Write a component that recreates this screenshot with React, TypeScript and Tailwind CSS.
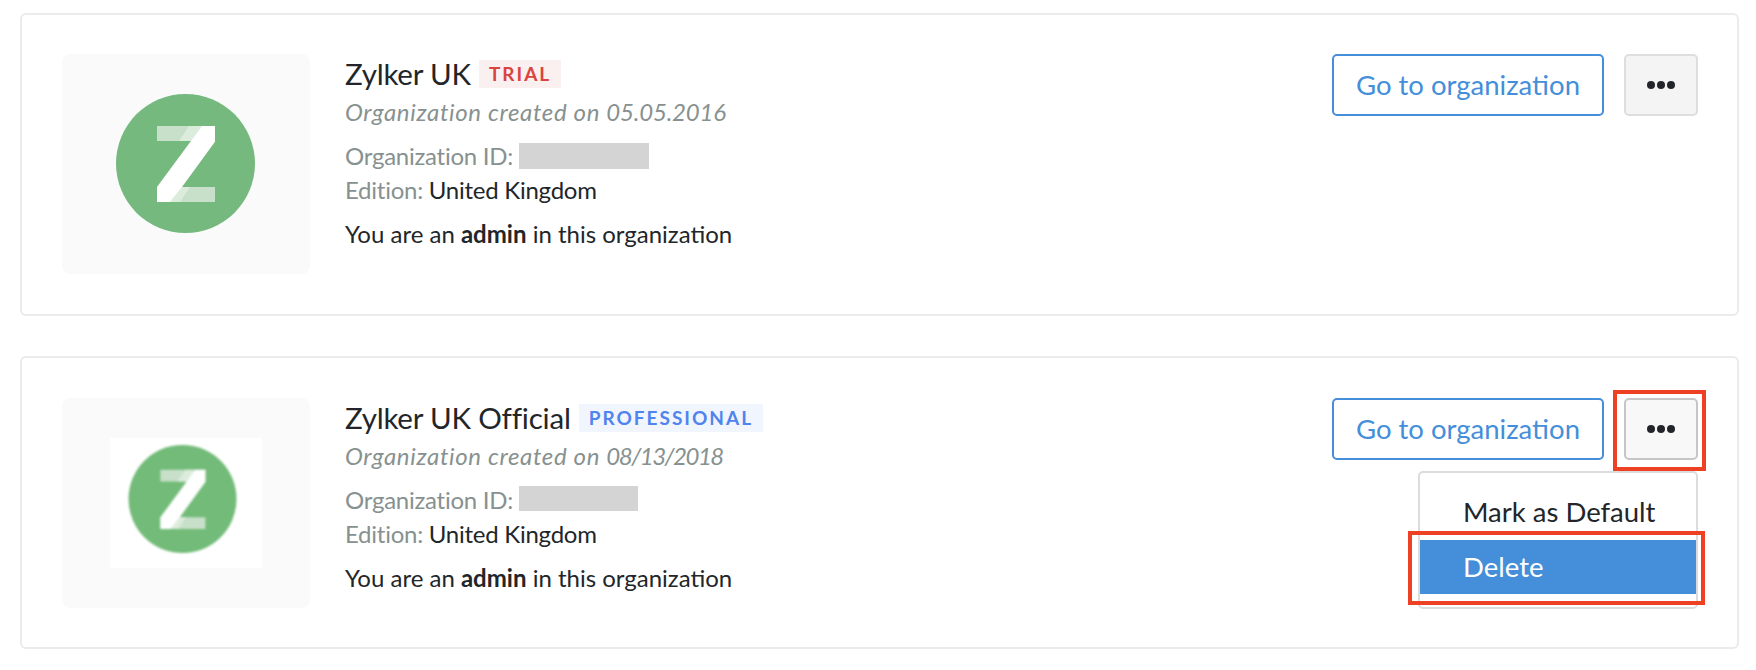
import React from "react";

const ZMark = ({ blur }: { blur?: boolean }) => (
  <svg viewBox="0 0 139 139" className={blur ? "h-[108px] w-[109px] blur-[0.8px]" : "h-[139px] w-[139px]"}>
    <circle cx="69.5" cy="69.5" r="69.5" fill={blur ? "#72bb78" : "#75b97f"} />
    <path d="M41 32h58v15H41z M41 93h58v15H41z" fill="#c8e0c9" />
    <path d="M73 32h13L75 47H63z M66 93h8l-10 15H54z" fill="#dcecdc" />
    <path d="M86 32h13v15.700L66 93 54 108H41V93L86 32z" fill="#fff" />
  </svg>
);

const Org = (props: {
  name: string;
  badge: string;
  badgeClass: string;
  date: string;
  dateClass: string;
  idClass: string;
  moreClass: string;
  cardClass: string;
  tileClass: string;
  blur?: boolean;
  children?: React.ReactNode;
}) => (
  <div className={`relative flex items-start rounded-[6px] border-2 border-[#ebebeb] bg-white pl-[40px] pr-[39px] ${props.cardClass}`}>
    <div className={`flex w-[248px] shrink-0 rounded-[8px] bg-[#fafafa] ${props.tileClass}`}>
      {props.blur ? (
        <div className="ml-[48px] mt-[40px] flex h-[130px] w-[152px] items-start bg-white pl-[18px] pt-[7px]">
          <ZMark blur />
        </div>
      ) : (
        <div className="ml-[54px] mt-[40px]">
          <ZMark />
        </div>
      )}
    </div>
    <div className="ml-[35px] flex-1 pt-[2px] text-[24px] text-[#22262a]">
      <div className="flex h-[36px] items-center">
        <span className="text-[29.5px] tracking-[-0.2px]">{props.name}</span>
        <span className={`ml-[8px] flex h-[28px] items-center px-[10px] text-[19px] font-bold tracking-[2px] ${props.badgeClass}`}>
          {props.badge}
        </span>
      </div>
      <div className="mt-[5px] h-[30px] italic leading-[30px] tracking-[0.65px] text-[#87918f]">
        Organization created on <span className={props.dateClass}>{props.date}</span>
      </div>
      <div className="mt-[14px] flex h-[30px] items-start leading-[30px] tracking-[-0.25px] text-[#87918f]">
        Organization ID:
        <span className={`ml-[6px] inline-block bg-[#d4d4d4] ${props.idClass}`} />
      </div>
      <div className="mt-[4px] h-[30px] leading-[30px] tracking-[-0.25px]">
        <span className="text-[#87918f]">Edition:</span> United Kingdom
      </div>
      <div className="mt-[14px] h-[30px] leading-[30px]">
        You are an <b>admin</b> in this organization
      </div>
    </div>
    <div className="flex shrink-0 gap-[20px]">
      <button className="h-[62px] w-[272px] rounded-[5px] border-2 border-[#458ed9] bg-white text-[27.5px] text-[#458ed9]">
        Go to organization
      </button>
      <button className={`flex h-[62px] w-[74px] items-center justify-center gap-[2px] rounded-[5px] border-2 ${props.moreClass}`}>
        <i className="h-[8px] w-[8px] rounded-full bg-[#22262a]" />
        <i className="h-[8px] w-[8px] rounded-full bg-[#22262a]" />
        <i className="h-[8px] w-[8px] rounded-full bg-[#22262a]" />
      </button>
    </div>
    {props.children}
  </div>
);

export default function App() {
  return (
    <div className="h-[670px] w-[1756px] overflow-hidden bg-white pl-[20px] pr-[17px] pt-[13px] font-['Lato',sans-serif]">
      <Org
        name="Zylker UK"
        badge="TRIAL"
        badgeClass="bg-[#f9f0ef] text-[#d9443f]"
        date="05.05.2016"
        dateClass="tracking-[-0.2px]"
        idClass="mt-[2px] h-[26px] w-[130px]"
        moreClass="border-[#dedede] bg-[#f4f4f4]"
        cardClass="h-[303px] pt-[39px]"
        tileClass="h-[220px]"
      />
      <Org
        name="Zylker UK Official"
        badge="PROFESSIONAL"
        badgeClass="bg-[#f1f5fd] text-[#4f84ee]"
        date="08/13/2018"
        dateClass="tracking-[-1.5px]"
        idClass="mt-[1px] h-[25px] w-[119px]"
        moreClass="border-[#c6c6c6] bg-[#f8f8f8]"
        cardClass="mt-[40px] h-[293px] pt-[40px]"
        tileClass="h-[210px]"
        blur
      >
        <div className="absolute left-[1396px] top-[113px] h-[138px] w-[280px] overflow-hidden rounded-[5px] border-2 border-[#dcdcdc] bg-white text-[27.5px]">
          <div className="flex h-[67px] items-end pb-[8px] pl-[43px] text-[#22262a]">Mark as Default</div>
          <div className="flex h-[54px] items-center bg-[#458ed9] pl-[43px] text-white">Delete</div>
        </div>
        <div className="absolute left-[1591px] top-[32px] h-[81px] w-[93px] border-4 border-[#ee4023]" />
        <div className="absolute left-[1386px] top-[173px] h-[74px] w-[297px] border-4 border-[#ee4023]" />
      </Org>
    </div>
  );
}
